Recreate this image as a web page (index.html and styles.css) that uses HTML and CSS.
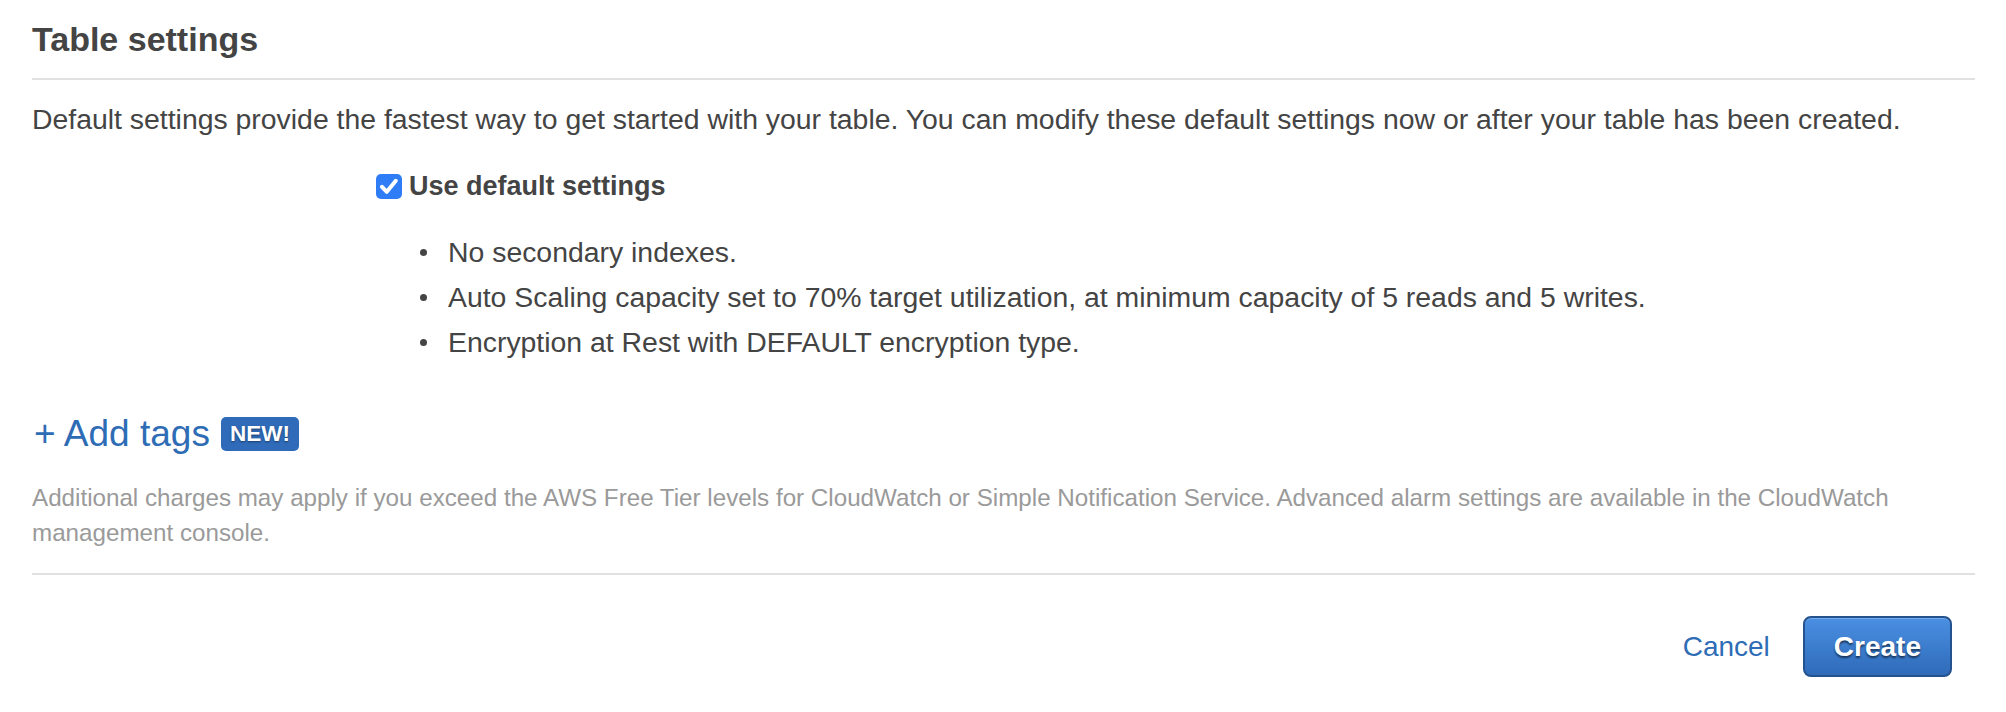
FILE: index.html
```html
<!DOCTYPE html>
<html lang="en">
<head>
<meta charset="utf-8">
<title>Table settings</title>
<link rel="stylesheet" href="styles.css">
</head>
<body>
<div class="panel">
  <h2 class="title">Table settings</h2>
  <div class="rule"></div>
  <p class="intro">Default settings provide the fastest way to get started with your table. You can modify these default settings now or after your table has been created.</p>
  <div class="defaults">
    <label class="check-row">
      <span class="checkbox"><svg viewBox="0 0 26 25" width="26" height="25"><path d="M6 12.8 L10.8 17.8 L19.8 6.8" fill="none" stroke="#fff" stroke-width="4" stroke-linecap="round" stroke-linejoin="round"/></svg></span>
      <span class="check-label">Use default settings</span>
    </label>
    <ul class="default-list">
      <li>No secondary indexes.</li>
      <li>Auto Scaling capacity set to 70% target utilization, at minimum capacity of 5 reads and 5 writes.</li>
      <li>Encryption at Rest with DEFAULT encryption type.</li>
    </ul>
  </div>
  <div class="tags">
    <a class="add-tags" href="#">+ Add tags</a>
    <span class="badge">NEW!</span>
  </div>
  <p class="note">Additional charges may apply if you exceed the AWS Free Tier levels for CloudWatch or Simple Notification Service. Advanced alarm settings are available in the CloudWatch management console.</p>
  <div class="rule rule-bottom"></div>
  <div class="actions">
    <a class="cancel" href="#">Cancel</a>
    <button class="create" type="button">Create</button>
  </div>
</div>
</body>
</html>
```

FILE: styles.css
```css
html, body {
  margin: 0;
  padding: 0;
  background: #ffffff;
}

body {
  font-family: "Liberation Sans", Arial, Helvetica, sans-serif;
  color: #444444;
}

.panel {
  padding: 17px 31px 0 32px;
}

.title {
  margin: 0;
  font-size: 34px;
  line-height: 44px;
  font-weight: bold;
  color: #444444;
}

.rule {
  height: 2px;
  background: #e1e1e1;
  margin-top: 17px;
}

.intro {
  margin: 19px 0 0;
  font-size: 28.4px;
  line-height: 40px;
  color: #444444;
}

.defaults {
  margin-top: 27px;
}

.check-row {
  display: flex;
  align-items: center;
  height: 40px;
  margin-left: 344px;
}

.checkbox {
  width: 26px;
  height: 25px;
  border-radius: 5px;
  background: #2f7df6;
  display: flex;
  align-items: center;
  justify-content: center;
}

.checkbox svg {
  display: block;
}

.check-label {
  margin-left: 7px;
  font-size: 27px;
  font-weight: bold;
  color: #444444;
}

.default-list {
  list-style: none;
  margin: 24px 0 0;
  padding: 0 0 0 388px;
}

.default-list li {
  display: flex;
  align-items: center;
  font-size: 28.4px;
  line-height: 45px;
  color: #444444;
}

.default-list li::before {
  content: "";
  width: 7px;
  height: 7px;
  border-radius: 50%;
  background: #444444;
  margin-right: 21px;
  flex: none;
}

.tags {
  margin-top: 45px;
  height: 48px;
  display: flex;
  align-items: center;
}

.add-tags {
  margin-left: 2px;
  font-size: 37px;
  color: #2e6cb5;
  text-decoration: none;
}

.badge {
  margin-left: 11px;
  height: 34px;
  padding: 0 9px;
  border-radius: 5px;
  background: #2f6bb8;
  color: #ffffff;
  font-size: 22.5px;
  font-weight: bold;
  line-height: 34px;
  text-shadow: 0 1px 2px rgba(0, 0, 0, 0.45);
}

.note {
  margin: 22px 0 0;
  font-size: 24.2px;
  line-height: 35px;
  color: #9a9a9a;
}

.rule-bottom {
  margin-top: 23px;
}

.actions {
  margin-top: 41px;
  padding-right: 23px;
  display: flex;
  justify-content: flex-end;
  align-items: center;
}

.cancel {
  font-size: 28px;
  color: #2e6cb5;
  text-decoration: none;
  margin-right: 33px;
}

.create {
  height: 61px;
  padding: 0 29px;
  border: 2px solid #24528f;
  border-radius: 8px;
  background: linear-gradient(#4a8fe2, #2f6bb9);
  color: #ffffff;
  font-family: "Liberation Sans", Arial, Helvetica, sans-serif;
  font-size: 28px;
  font-weight: bold;
  text-shadow: 0 2px 2px rgba(0, 0, 0, 0.55);
  box-shadow: inset 0 1px 0 rgba(255, 255, 255, 0.25);
  cursor: pointer;
}
```
